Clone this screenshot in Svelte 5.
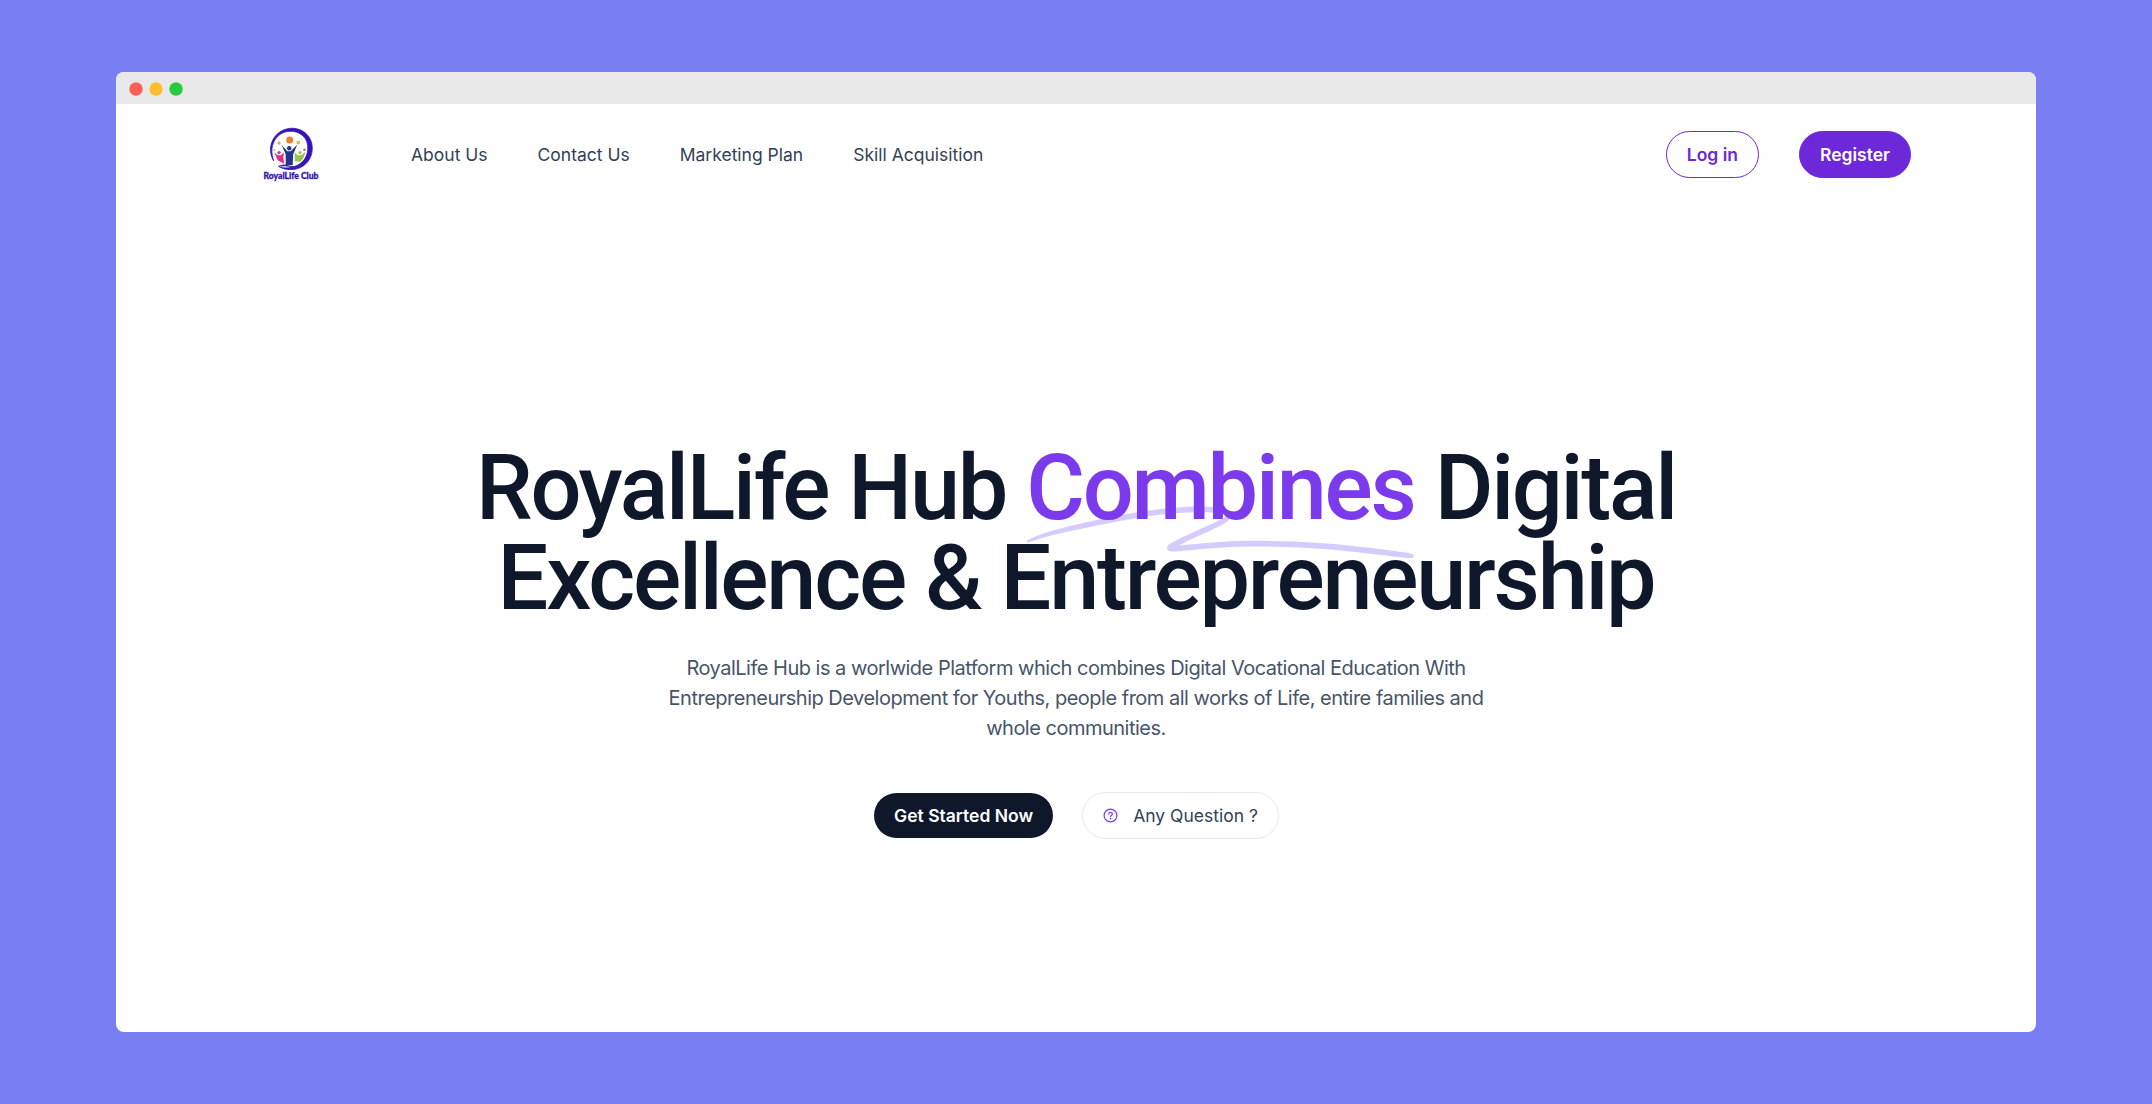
<script>
  const links = ['About Us', 'Contact Us', 'Marketing Plan', 'Skill Acquisition'];
</script>

<div class="stage">
  <div class="window">
    <div class="titlebar">
      <svg class="dots" viewBox="0 0 60 16" aria-hidden="true">
        <circle cx="8" cy="8" r="6.700" fill="#ff5f57" />
        <circle cx="28" cy="8" r="6.700" fill="#febc2e" />
        <circle cx="48" cy="8" r="6.700" fill="#28c840" />
      </svg>
    </div>

    <header>
      <svg class="logo" viewBox="0 0 100 60" aria-label="RoyalLife Club">
        <g transform="translate(-1.300 -0.700)">
          <path
            d="M34 36.500C27 25 32 9.200 46 4.900C57 1.500 69.500 7.500 72 19C75 33 65.500 45.300 51 45.300C47 45.300 43 44.500 40 42.700C55 45.500 66.500 39 68 26C69.500 13.500 60 6.300 49.500 7C36 8 28.500 22 34 36.500Z"
            fill="#3413b8"
            stroke="#3413b8"
            stroke-width="0.800"
          />
          <path d="M39 42.500Q43 39.500 49 42Q55 44 61 40.500" fill="none" stroke="#3b2a9c" stroke-width="1.500" />
          <path d="M39 41Q43 44 50 42.500" fill="none" stroke="#8d87c4" stroke-width="1.200" />
          <circle cx="50" cy="15.700" r="3.500" fill="#f0812c" />
          <circle cx="58.600" cy="18.300" r="1.900" fill="#ebb44c" />
          <circle cx="39.300" cy="18.800" r="1.600" fill="#a5b878" />
          <circle cx="34.600" cy="25.800" r="1.100" fill="#a8cf72" />
          <circle cx="64.700" cy="25.500" r="1.200" fill="#d0549c" />
          <circle cx="49.500" cy="24" r="2.200" fill="#24318f" />
          <path d="M41.800 20.500L47.500 27H51L57.500 20.500L53.500 30L53 41H46L46 30Z" fill="#24318f" />
          <circle cx="39.300" cy="28.300" r="1.700" fill="#e0338c" />
          <path d="M34.500 28L38 31H41L44.500 28.500L43.500 33L44.500 39.500L38 36Z" fill="#dd2f86" />
          <circle cx="60.300" cy="28.300" r="1.700" fill="#9fca5a" />
          <path d="M55 28L58 31H61.500L66 27L64 33L61 37.500L55 37Z" fill="#94c452" />
        </g>
        <text x="22.500" y="53.800" textLength="55" lengthAdjust="spacingAndGlyphs">RoyalLife Club</text>
      </svg>
      <nav>
        {#each links as link}
          <a href="#top">{link}</a>
        {/each}
      </nav>
      <div class="account">
        <button class="pill login">Log in</button>
        <button class="pill register">Register</button>
      </div>
    </header>

    <main>
      <h1>
        RoyalLife Hub
        <span class="accent">
          <svg viewBox="0 0 418 42" preserveAspectRatio="none" aria-hidden="true">
            <path
              d="M203.371.916c-26.013-2.078-76.686 1.963-124.73 9.946L67.3 12.749C35.421 18.062 18.2 21.766 6.004 25.934 1.244 27.561.828 27.778.874 28.61c.07 1.214.828 1.121 9.595-1.176 9.072-2.377 17.15-3.92 39.246-7.496C123.565 7.986 157.869 4.492 195.942 5.046c7.461.108 19.25 1.696 19.17 2.582-.107 1.183-7.874 4.31-25.75 10.366-21.992 7.45-35.43 12.534-36.701 13.884-2.173 2.308-.202 4.407 4.442 4.734 2.654.187 3.263.157 15.593-.78 35.401-2.686 57.944-3.488 88.365-3.143 46.327.526 75.721 2.23 130.788 7.584 19.787 1.924 20.814 1.98 24.557 1.332l.066-.011c1.201-.203 1.53-1.825.399-2.335-2.911-1.31-4.893-1.604-22.048-3.261-57.509-5.556-87.871-7.36-132.059-7.842-23.239-.254-33.617-.116-50.627.674-11.629.54-42.371 2.494-46.696 2.967-2.359.259 8.133-3.625 26.504-9.81 23.239-7.825 27.934-10.149 28.304-14.005.417-4.348-3.529-6-16.878-7.066Z"
            />
          </svg>
          <span class="word">Combines</span>
        </span>
        Digital Excellence &amp; Entrepreneurship
      </h1>
      <p>
        RoyalLife Hub is a worlwide Platform which combines Digital Vocational Education With
        Entrepreneurship Development for Youths, people from all works of Life, entire families and
        whole communities.
      </p>
      <div class="actions">
        <button class="pill start">Get Started Now</button>
        <button class="pill question">
          <svg viewBox="0 0 15 15" fill="none" stroke="#7c3aed" stroke-width="1.200" stroke-linecap="round" aria-hidden="true">
            <circle cx="7.500" cy="7.500" r="6.400" />
            <path d="M5.700 6.100C5.700 3.700 9.400 3.700 9.400 6C9.400 7.400 7.600 7.300 7.600 8.600" />
            <path d="M7.600 10.600V10.700" stroke-width="1.500" />
          </svg>
          Any Question ?
        </button>
      </div>
    </main>
  </div>
</div>

<style>
  :global(body) {
    margin: 0;
    background: #797ef3;
  }
  .stage {
    box-sizing: border-box;
    height: 1104px;
    padding: 72px 116px;
    background: #797ef3;
    font-family: Inter, sans-serif;
  }
  .window {
    height: 960px;
    border-radius: 8px;
    overflow: hidden;
    background: #fff;
  }
  .titlebar {
    display: flex;
    align-items: center;
    height: 32px;
    box-sizing: border-box;
    padding: 2px 0 0 12px;
    background: #e8e8e8;
  }
  .dots {
    width: 60px;
    height: 16px;
  }
  header {
    display: flex;
    align-items: center;
    height: 101px;
    padding: 0 125px;
  }
  .logo {
    width: 100px;
    height: 60px;
  }
  .logo text {
    font: 900 9.500px Lato, sans-serif;
    fill: #3413a8;
    stroke: #3413a8;
    stroke-width: 0.300px;
  }
  nav {
    display: flex;
    gap: 30px;
    margin-left: 60px;
  }
  nav a {
    padding: 5px 10px;
    font-size: 17.500px;
    line-height: 25px;
    color: #334155;
    text-decoration: none;
  }
  .account {
    display: flex;
    gap: 40px;
    margin-left: auto;
  }
  .pill {
    display: inline-flex;
    align-items: center;
    justify-content: center;
    border: 0;
    border-radius: 999px;
    padding: 10px 20px;
    font-family: inherit;
    font-size: 17.500px;
    font-weight: 600;
    line-height: 25px;
    color: #fff;
    white-space: nowrap;
  }
  .login {
    border: 1px solid #6d28d9;
    background: #fff;
    color: #6d28d9;
  }
  .register {
    border: 1px solid #6d28d9;
    background: #6d28d9;
  }
  main {
    display: flex;
    flex-direction: column;
    align-items: center;
    padding-top: 238.500px;
    text-align: center;
  }
  h1 {
    width: 1280px;
    margin: 0;
    font-family: Roboto, sans-serif;
    font-size: 90px;
    font-weight: 500;
    line-height: 90px;
    letter-spacing: -0.025em;
    color: #0f172a;
  }
  .accent {
    position: relative;
    white-space: nowrap;
    color: #7c3aed;
  }
  .accent svg {
    position: absolute;
    left: 0;
    top: 66.667%;
    width: 100%;
    height: 0.580em;
    fill: rgb(196 181 253 / 0.7);
  }
  .word {
    position: relative;
  }
  p {
    width: 840px;
    margin: 29.500px 0 0;
    font-size: 20px;
    line-height: 30px;
    letter-spacing: -0.025em;
    color: #475569;
  }
  .actions {
    display: flex;
    align-items: center;
    gap: 29px;
    margin: 49px 0 0 1px;
  }
  .start {
    background: #0f172a;
  }
  .question {
    gap: 15px;
    border: 1px solid #e2e8f0;
    background: #fff;
    font-weight: 400;
    color: #334155;
  }
  .question svg {
    width: 15px;
    height: 15px;
  }
</style>
